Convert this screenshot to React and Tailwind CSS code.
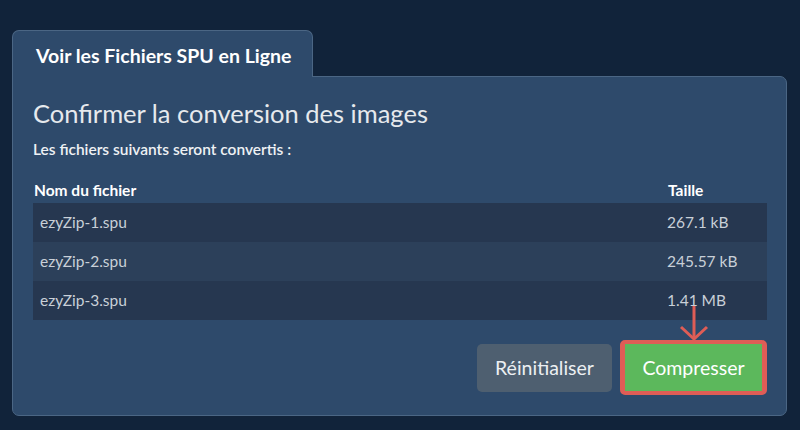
import React from "react";

const files = [
  { name: "ezyZip-1.spu", size: "267.1 kB" },
  { name: "ezyZip-2.spu", size: "245.57 kB" },
  { name: "ezyZip-3.spu", size: "1.41 MB" },
];

const App = () => {
  return (
    <div
      className="w-full h-[430px] bg-[#11233a] pt-[30px] pl-[12px] pr-[13px]"
      style={{ fontFamily: "Lato, 'Open Sans', sans-serif" }}
    >
      {/* Tab */}
      <div className="w-[301px] h-[47px] bg-[#2e4a6b] border border-b-0 border-[#4b6684] rounded-t-[7px] flex items-center pl-[23px] pt-[3px] relative z-10 -mb-px">
        <span className="text-[19.5px] font-bold text-white">
          Voir les Fichiers SPU en Ligne
        </span>
      </div>

      {/* Panel */}
      <div className="bg-[#2e4a6b] border border-[#4b6684] rounded-b-[7px] rounded-tr-[7px] pt-[20px] pl-[20px] pr-[19px] pb-[20px]">
        <h1 className="text-[25.5px] leading-[32px] text-[#e6e9ed]">
          Confirmer la conversion des images
        </h1>
        <p className="mt-[10px] text-[15.5px] leading-[20px] font-semibold text-[#eef1f4]">
          Les fichiers suivants seront convertis :
        </p>

        {/* Table */}
        <div className="mt-[18px]">
          <div className="flex text-[15.5px] leading-[20px] font-bold text-white py-[3px]">
            <div className="w-[627px] pl-[1px]">Nom du fichier</div>
            <div className="pl-[8px]">Taille</div>
          </div>
          {files.map((f, i) => (
            <div
              key={i}
              className={
                "flex h-[39px] items-center text-[15.5px] text-[#c9d0d8] " +
                (i % 2 === 0 ? "bg-[#263750]" : "bg-[#2c405a]")
              }
            >
              <div className="w-[627px] pl-[7px]">{f.name}</div>
              <div className="pl-[7px]">{f.size}</div>
            </div>
          ))}
        </div>

        {/* Buttons */}
        <div className="flex justify-end items-center gap-[8px] mt-[20px]">
          <button className="w-[135px] h-[48px] bg-[#4e5f70] rounded-[5px] text-[19.5px] text-[#eceff2]">
            Réinitialiser
          </button>
          <div className="relative border-x-[5px] border-y-4 border-[#df5d56] rounded-[5px]">
            <button className="block w-[137px] h-[47px] bg-[#5cb85c] text-[19.5px] text-white">
              Compresser
            </button>
            <svg
              className="absolute left-[53px] top-[-40px]"
              width="32"
              height="38"
              viewBox="0 0 32 38"
              fill="none"
              stroke="#df5d56"
              strokeWidth="3"
            >
              <path d="M16 2 V35" />
              <path d="M3 23 L16 35 L29 23" />
            </svg>
          </div>
        </div>
      </div>
    </div>
  );
};

export default App;
